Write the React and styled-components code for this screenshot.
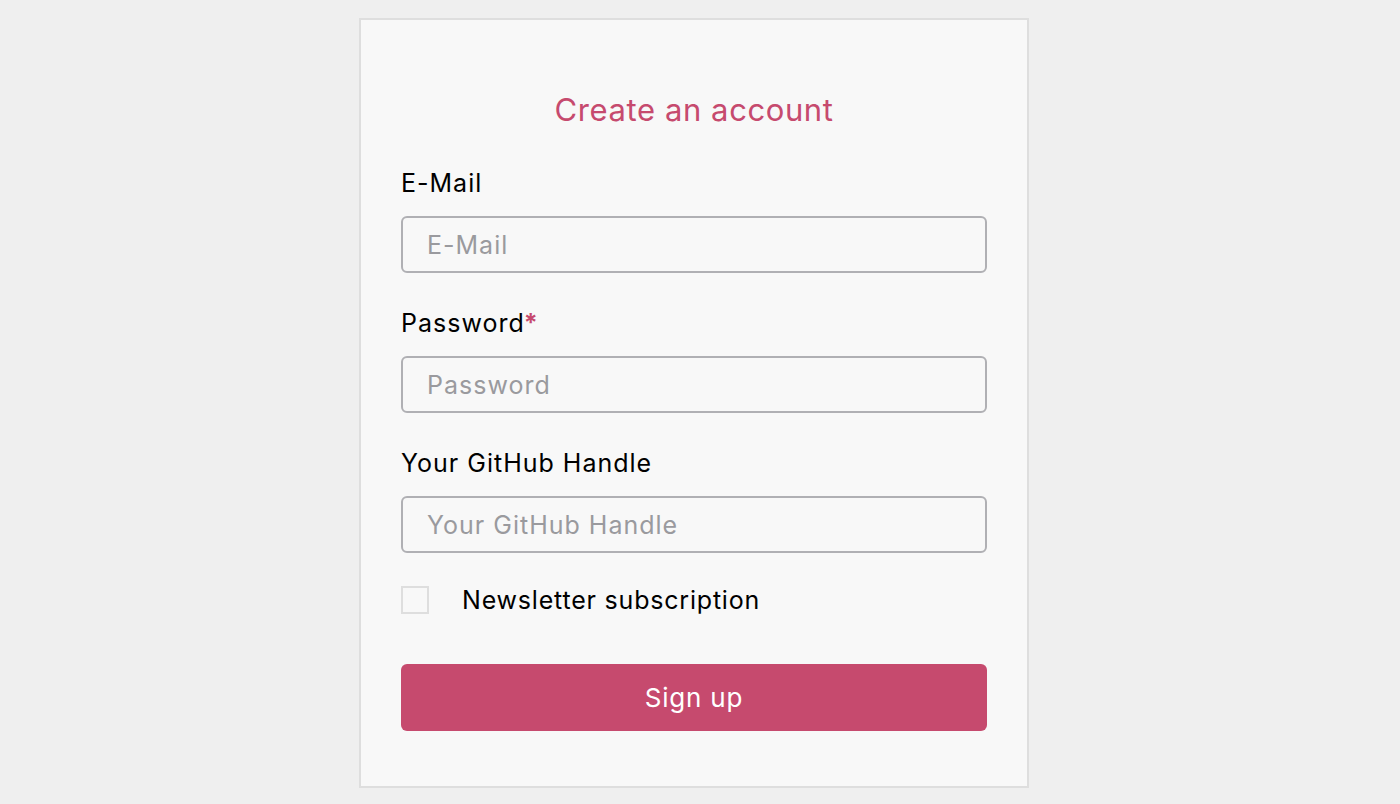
import React from 'react';
import styled, { createGlobalStyle } from 'styled-components';

const GlobalStyle = createGlobalStyle`
  html, body {
    margin: 0;
    padding: 0;
    background: #efefef;
    font-family: "Inter", "Noto Sans", sans-serif;
  }
`;

const Page = styled.div`
  display: flex;
  justify-content: center;
  padding: 18px 12px 0 0;
`;

const Card = styled.form`
  box-sizing: border-box;
  width: 670px;
  padding: 68px 40px 55px;
  background: #f8f8f8;
  border: 2px solid #dedede;
  display: flex;
  flex-direction: column;
`;

const Title = styled.h2`
  margin: 0 0 35px;
  text-align: center;
  font-weight: 400;
  font-size: 31px;
  letter-spacing: 0.6px;
  line-height: 44px;
  color: #c64a6e;
`;

const Field = styled.div`
  display: flex;
  flex-direction: column;
  margin-bottom: 34px;
`;

const Label = styled.label`
  font-size: 25px;
  letter-spacing: 1px;
  line-height: 32px;
  color: #000;
  margin-bottom: 17px;
`;

const Required = styled.span`
  color: #c64a6e;
  font-weight: 700;
  margin-left: -1px;
`;

const Input = styled.input`
  box-sizing: border-box;
  height: 57px;
  width: 100%;
  padding: 0 24px;
  border: 2px solid #b0b0b4;
  border-radius: 6px;
  background: #f8f8f8;
  font-family: inherit;
  font-size: 25px;
  letter-spacing: 1px;
  color: #000;
  outline: none;

  &::placeholder {
    color: #9a9a9e;
  }
`;

const CheckRow = styled.label`
  display: flex;
  align-items: center;
  gap: 33px;
  margin-top: -2px;
  font-size: 25px;
  letter-spacing: 0.8px;
  color: #000;
`;

const Box = styled.span`
  box-sizing: border-box;
  width: 28px;
  height: 28px;
  border: 2px solid #dedede;
  background: #f8f8f8;
`;

const Button = styled.button`
  margin-top: 49px;
  height: 67px;
  border: none;
  border-radius: 6px;
  background: #c64a6e;
  color: #fff;
  font-family: inherit;
  font-size: 26px;
  letter-spacing: 0.8px;
  cursor: pointer;
`;

const fields = [
  { id: 'email', label: 'E-Mail', type: 'email' },
  { id: 'password', label: 'Password', type: 'password', required: true },
  { id: 'github', label: 'Your GitHub Handle', type: 'text' },
];

export default function App() {
  return (
    <>
      <GlobalStyle />
      <Page>
        <Card onSubmit={(e) => e.preventDefault()}>
          <Title>Create an account</Title>
          {fields.map((f) => (
            <Field key={f.id}>
              <Label htmlFor={f.id}>
                {f.label}
                {f.required && <Required>*</Required>}
              </Label>
              <Input id={f.id} type={f.type} placeholder={f.label} />
            </Field>
          ))}
          <CheckRow>
            <Box />
            Newsletter subscription
          </CheckRow>
          <Button type="submit">Sign up</Button>
        </Card>
      </Page>
    </>
  );
}
